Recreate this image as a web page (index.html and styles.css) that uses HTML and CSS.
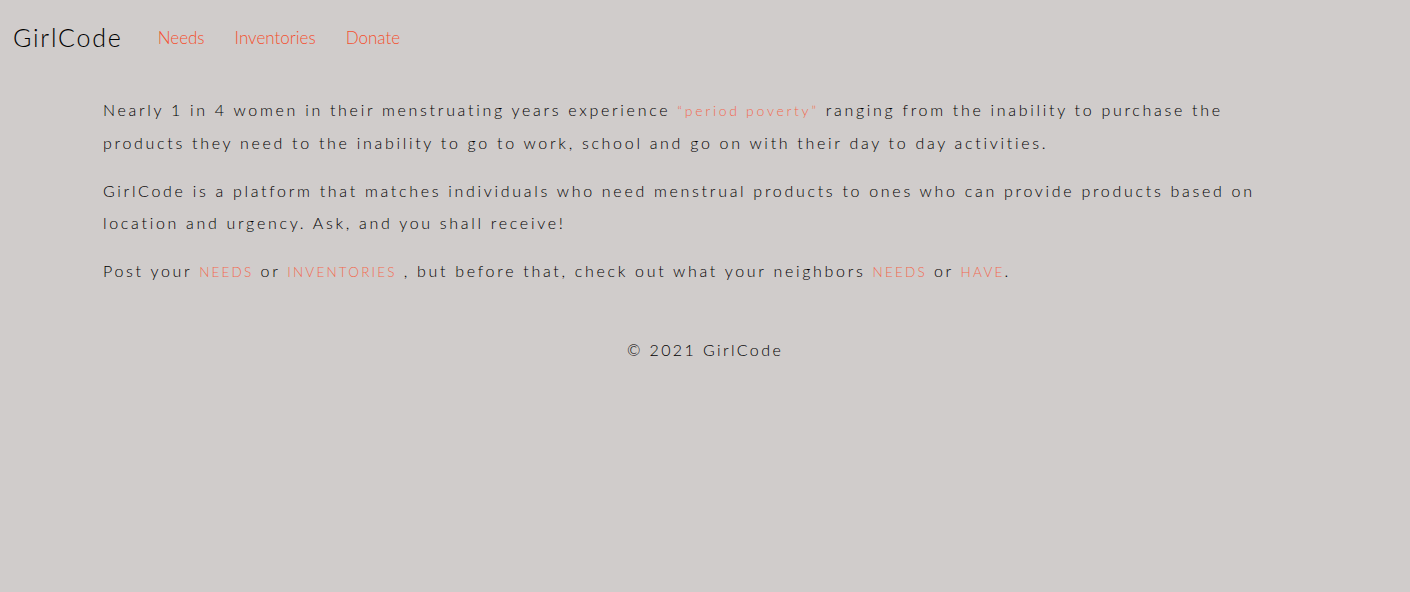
FILE: index.html
```html
<!DOCTYPE html>
<html>
<head>
<meta charset="utf-8">
<link rel="stylesheet" href="styles.css">
</head>
<body>
<header class="navbar">
  <a class="brand" href="#">GirlCode</a>
  <nav class="nav">
    <a class="nav-link" href="#">Needs</a>
    <a class="nav-link" href="#">Inventories</a>
    <a class="nav-link" href="#">Donate</a>
  </nav>
</header>
<main class="content">
  <p>Nearly 1 in 4 women in their menstruating years experience <span class="accent">“period poverty”</span> ranging from the inability to purchase the products they need to the inability to go to work, school and go on with their day to day activities.</p>
  <p>GirlCode is a platform that matches individuals who need menstrual products to ones who can provide products based on location and urgency. Ask, and you shall receive!</p>
  <p>Post your <a class="caps" href="#">Needs</a> or <a class="caps" href="#">Inventories</a> , but before that, check out what your neighbors <a class="caps" href="#">Needs</a> or <a class="caps" href="#">Have</a>.</p>
</main>
<footer class="footer">© 2021 GirlCode</footer>
</body>
</html>
```
FILE: styles.css
```css
html, body {
  margin: 0;
  padding: 0;
  background: #d0cccb;
}
body {
  font-family: "Lato", "Open Sans", sans-serif;
  font-weight: 300;
  color: #000;
  min-height: 592px;
}
.navbar {
  display: flex;
  align-items: center;
  height: 74px;
  padding: 0 13px;
}
.brand {
  font-size: 25px;
  letter-spacing: 1.8px;
  color: #000;
  text-decoration: none;
  font-weight: 300;
  margin-right: 35px;
}
.nav {
  display: flex;
  gap: 30px;
}
.nav-link {
  font-size: 17px;
  color: #f4502f;
  text-decoration: none;
}
.content {
  padding: 20px 103px 0 103px;
}
.content p {
  margin: 0 0 16px;
  font-size: 16px;
  line-height: 32px;
  letter-spacing: 2.7px;
  font-weight: 300;
}
.accent {
  color: #f26a50;
  font-size: 14px;
}
.caps {
  color: #f26a50;
  text-transform: uppercase;
  font-size: 13.5px;
  letter-spacing: 2.2px;
  text-decoration: none;
}
.footer {
  text-align: center;
  font-size: 16px;
  letter-spacing: 2.4px;
  font-weight: 300;
  padding-top: 36px;
}
```
